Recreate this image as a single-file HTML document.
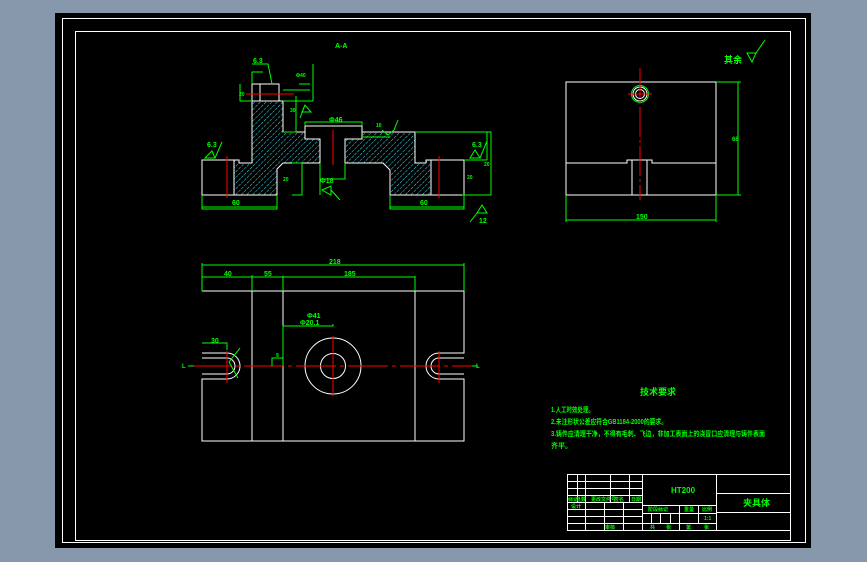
<!DOCTYPE html>
<html><head><meta charset="utf-8"><style>
html,body{margin:0;padding:0;width:867px;height:562px;overflow:hidden;background:#8898ac}
svg{position:absolute;left:0;top:0}
text{font-family:"Liberation Sans","Noto Sans CJK SC",sans-serif;fill:#00ff00;font-weight:bold}
</style></head><body>
<svg width="867" height="562" viewBox="0 0 867 562" xmlns="http://www.w3.org/2000/svg">
<defs>
<pattern id="h" width="4" height="4" patternUnits="userSpaceOnUse" patternTransform="rotate(45)">
<line x1="0" y1="0" x2="0" y2="4" stroke="#40e0f0" stroke-width="1" stroke-dasharray="3 1"/>
</pattern>
</defs>
<rect x="55" y="13" width="756" height="535" fill="#000"/>
<rect x="62.5" y="18.5" width="743" height="524" fill="none" stroke="#fff" stroke-width="1"/>
<rect x="75.5" y="31.5" width="715" height="509" fill="none" stroke="#fff" stroke-width="1"/>

<!-- FRONT SECTION VIEW -->
<g stroke="#fff" stroke-width="1" >
<path d="M202,160 H239 V163 H252 V101 H283 V132 H305 V139 H320 V163 H283 L277,169 V195 H202 Z" fill="url(#h)"/>
<path d="M362,132 H415 V163 H426 V160 H464 V195 H390 V170 L383,163 H345 V139 H362 Z" fill="url(#h)"/>
<rect x="202" y="160" width="32" height="35" fill="#000"/>
<rect x="431" y="160" width="33" height="35" fill="#000"/>
<rect x="252" y="84" width="27" height="17" fill="#000"/>
<line x1="260" y1="84" x2="260" y2="101"/>
<path d="M305,132 V126 H362 V132" fill="none"/>
</g>
<g stroke="#ff0000" stroke-width="1">
<line x1="227" y1="156" x2="227" y2="198"/>
<line x1="333" y1="130" x2="333" y2="165"/>
<line x1="439" y1="156" x2="439" y2="198"/>
<line x1="246" y1="94" x2="294" y2="94"/>
</g>
<g stroke="#00ff00" stroke-width="1" fill="none">
<path d="M202,195 V209 H277 V195 M202,207 H277"/>
<path d="M390,195 V209 H464 V195 M390,207 H464"/>
<path d="M415,132 H491 V195 H462 M487,132 V160 M464,160 H487"/>
<path d="M283,132 H296 V96 M283,101 H313 M299,84 H310 M283,90 H310"/>
<path d="M313,64 V101 M305,126 V122 H362 V126"/>
<path d="M320,163 V195 M345,163 V179 H320"/>
<path d="M292,163 H302 V195 H292"/>
<path d="M252,84 V72 H263 M240,84 V101 H252 M252,64 H268 L272,84"/>
<path d="M205,158 L215,158 L212,151 Z M215,158 L222,142"/>
<path d="M470,158 L480,158 L475,150 Z M480,158 L487,141"/>
<path d="M482,205 L477,213 H487 Z M477,213 L470,222"/>
<path d="M305,105 L302,112 H311 Z M305,105 L300,118"/>
<path d="M382,130 L388,135 L394,130 M394,130 L398,120 M362,137 H390"/>
<path d="M322,190 L331,186 L331,195 Z M331,190 L340,200"/>
</g>
<g font-size="7">
<text x="335" y="48">A-A</text>
<text x="253" y="63">6.3</text>
<text x="329" y="122">Φ46</text>
<text x="232" y="205">60</text>
<text x="420" y="205">60</text>
<text x="207" y="147">6.3</text>
<text x="472" y="147">6.3</text>
<text x="320" y="183">Φ18</text>
<text x="283" y="181" font-size="5">20</text>
<text x="479" y="223">12</text>
<text x="484" y="166" font-size="5">20</text>
<text x="467" y="179" font-size="5">20</text>
<text x="290" y="112" font-size="5">30</text>
<text x="296" y="77" font-size="5">Φ40</text>
<text x="239" y="96" font-size="5">20</text>
<text x="376" y="127" font-size="5">10</text>
</g>

<!-- RIGHT VIEW -->
<g stroke="#fff" stroke-width="1" fill="none">
<rect x="566" y="82" width="150" height="113"/>
<path d="M566,163 H627 V160 H652 V163 H716 M632,160 V195 M647,160 V195"/>
<circle cx="640" cy="94" r="7"/>
<circle cx="640" cy="94" r="4.5"/>
</g>
<circle cx="640" cy="94" r="8.5" stroke="#00ff00" fill="none"/>
<g stroke="#ff0000" stroke-width="1">
<line x1="640" y1="68" x2="640" y2="200" stroke-dasharray="30 3 3 3"/>
<line x1="628" y1="94" x2="652" y2="94"/>
</g>
<g stroke="#00ff00" fill="none">
<path d="M716,82 H741 M716,195 H741 M738,82 V195"/>
<path d="M566,195 V222 M716,195 V222 M566,220 H716"/>
<path d="M747,53 L752,62 L756,53 Z M756,53 L765,40"/>
</g>
<g font-size="7">
<text x="636" y="219">150</text>
<text x="732" y="141" font-size="6">68</text>
<text x="724" y="63" font-size="9">其余</text>
</g>

<!-- BOTTOM VIEW -->
<g stroke="#fff" stroke-width="1" fill="none">
<path d="M202,291 H464 V353 H444 M444,379 H464 V441 H202 V379 H222 M222,353 H202 Z"/>
<line x1="252" y1="291" x2="252" y2="441"/>
<line x1="283" y1="291" x2="283" y2="441"/>
<line x1="415" y1="291" x2="415" y2="441"/>
<path d="M202,353 H227 A13,13 0 0 1 227,379 H202"/>
<path d="M202,358 H227 A8,8 0 0 1 227,374 H202"/>
<path d="M464,353 H439 A13,13 0 0 0 439,379 H464"/>
<path d="M464,358 H439 A8,8 0 0 0 439,374 H464"/>
<circle cx="333" cy="366" r="28"/>
<circle cx="333" cy="366" r="12.5"/>
</g>
<g stroke="#ff0000" stroke-width="1">
<line x1="192" y1="366" x2="474" y2="366" stroke-dasharray="40 4 4 4"/>
<line x1="333" y1="336" x2="333" y2="396"/>
<line x1="227" y1="351" x2="227" y2="383"/>
<line x1="439" y1="351" x2="439" y2="383"/>
</g>
<g stroke="#00ff00" fill="none">
<path d="M202,263 V291 M464,263 V291 M202,265 H464"/>
<path d="M202,277 H415 M252,275 V291 M283,276 V291 M415,276 V291"/>
<path d="M283,366 V326 H333 V324"/>
<path d="M272,366 V358 H283"/>
<path d="M202,343 H227 V350"/>
<path d="M188,366 H194 M472,366 H478"/>
<path d="M240,348 L229,362 L238,378"/>
</g>
<g font-size="7">
<text x="329" y="264">218</text>
<text x="224" y="276">40</text>
<text x="264" y="276">55</text>
<text x="344" y="276">185</text>
<text x="307" y="318">Φ41</text>
<text x="300" y="325">Φ20.1</text>
<text x="211" y="343">30</text>
<text x="276" y="357" font-size="5">9</text>
<text x="182" y="368" font-size="6">L</text>
<text x="476" y="368" font-size="6">L</text>
</g>

<!-- TECH REQUIREMENTS -->
<g font-size="7">
<text x="640" y="395" font-size="9">技术要求</text>
<text x="551" y="412" textLength="43" lengthAdjust="spacingAndGlyphs">1.人工时效处理。</text>
<text x="551" y="424" textLength="116" lengthAdjust="spacingAndGlyphs">2.未注形状公差应符合GB1184-2000的要求。</text>
<text x="551" y="436" textLength="214" lengthAdjust="spacingAndGlyphs">3.铸件应清理干净，不得有毛刺、飞边，非加工表面上的浇冒口应清理与铸件表面</text>
<text x="551" y="448">齐平。</text>
</g>

<!-- TITLE BLOCK -->
<g stroke="#fff" stroke-width="1" fill="none">
<rect x="567.5" y="474.5" width="223" height="56"/>
<line x1="642.5" y1="474" x2="642.5" y2="530"/>
<line x1="716.5" y1="474" x2="716.5" y2="530"/>
<line x1="716" y1="493.5" x2="791" y2="493.5"/>
<line x1="716" y1="512.5" x2="791" y2="512.5"/>
<path d="M567,481.5 H642 M567,488.5 H642 M567,495.5 H642 M567,502.5 H642 M567,509.5 H642 M567,516.5 H642 M567,523.5 H642"/>
<path d="M577.5,474 V502 M585.5,474 V502 M610.5,474 V502 M629.5,474 V502"/>
<path d="M585.5,502 V530 M604.5,502 V530 M623.5,502 V530"/>
<path d="M642,505.5 H716 M642,513.5 H716 M642,523.5 H716"/>
<path d="M651.5,513 V523 M660.5,513 V523 M670.5,513 V523 M679.5,505 V530 M698.5,505 V523"/>
</g>
<g font-size="5">
<text x="568" y="501">标记</text>
<text x="576" y="501">处数</text>
<text x="591" y="501">更改文件号</text>
<text x="614" y="501">签名</text>
<text x="631" y="501">日期</text>
<text x="571" y="508">设计</text>
<text x="605" y="529">审核</text>
<text x="648" y="511">阶段标记</text>
<text x="684" y="511">重量</text>
<text x="702" y="511">比例</text>
<text x="650" y="529">共</text>
<text x="666" y="529">张</text>
<text x="686" y="529">第</text>
<text x="704" y="529">张</text>
<text x="704" y="520">1:1</text>
</g>
<text x="671" y="493" font-size="8">HT200</text>
<text x="743" y="506" font-size="9">夹具体</text>
</svg>
</body></html>
